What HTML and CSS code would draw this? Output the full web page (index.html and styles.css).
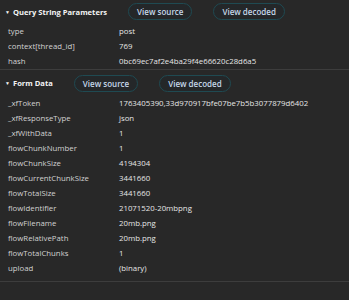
FILE: index.html
```html
<!DOCTYPE html>
<html lang="en">

<head>
    <meta charset="UTF-8">
    <meta name="viewport" content="width=device-width, initial-scale=1.0">
    <title>Payload</title>
    <link rel="stylesheet" href="styles.css">
</head>

<body>

    <div class="section">
        <div class="sectionHead first">
            <h3 class="title"><span class="arrow">&#9660;</span>Query String Parameters</h3>
            <button class="pill">View source</button>
            <button class="pill">View decoded</button>
        </div>
        <ul class="params">
            <li><span class="key">type</span><span class="val">post</span></li>
            <li><span class="key">context[thread_id]</span><span class="val">769</span></li>
            <li><span class="key">hash</span><span class="val">0bc69ec7af2e4ba29f4e66620c28d6a5</span></li>
        </ul>
    </div>

    <div class="section">
        <div class="sectionHead">
            <h3 class="title"><span class="arrow">&#9660;</span>Form Data</h3>
            <button class="pill">View source</button>
            <button class="pill">View decoded</button>
        </div>
        <ul class="params">
            <li><span class="key">_xfToken</span><span class="val">1763405390,33d970917bfe07be7b5b3077879d6402</span></li>
            <li><span class="key">_xfResponseType</span><span class="val">json</span></li>
            <li><span class="key">_xfWithData</span><span class="val">1</span></li>
            <li><span class="key">flowChunkNumber</span><span class="val">1</span></li>
            <li><span class="key">flowChunkSize</span><span class="val">4194304</span></li>
            <li><span class="key">flowCurrentChunkSize</span><span class="val">3441660</span></li>
            <li><span class="key">flowTotalSize</span><span class="val">3441660</span></li>
            <li><span class="key">flowIdentifier</span><span class="val">21071520-20mbpng</span></li>
            <li><span class="key">flowFilename</span><span class="val">20mb.png</span></li>
            <li><span class="key">flowRelativePath</span><span class="val">20mb.png</span></li>
            <li><span class="key">flowTotalChunks</span><span class="val">1</span></li>
            <li><span class="key">upload</span><span class="val">(binary)</span></li>
        </ul>
    </div>

</body>

</html>
```

FILE: styles.css
```css
* {margin: 0; padding: 0; box-sizing: border-box;}
ul,li {list-style: none;}

body {background: #282828; color: #e2e2e2; font-family: "Open Sans", "Noto Sans", sans-serif; font-size: 7.8px; height: 300px; overflow: hidden;}

.section {border-bottom: 1px solid #3d3d3d;}
.section:last-child {padding-bottom: 5px;}

.sectionHead {display: flex; align-items: center; gap: 21px; height: 26px; padding-left: 5px; white-space: nowrap;}
.sectionHead.first {height: 25px; margin-top: -1px;}
.title {font-size: 7.6px; font-weight: 700; color: #f4f4f4; display: flex; align-items: center;}
.arrow {font-size: 5px; width: 8px;}

.pill {height: 17px; padding: 0 8px; border-radius: 9px; border: 1px solid #1f4a52; background: #242729; color: #c6d8ea; font-family: inherit; font-size: 8px; font-weight: 600;}

.params li {display: flex; height: 15px; line-height: 15px; padding-left: 8px; white-space: nowrap;}
.params .key {flex: 0 0 111px; color: #d2d2d2;}
.params .val {color: #e6e6e6;}
```
